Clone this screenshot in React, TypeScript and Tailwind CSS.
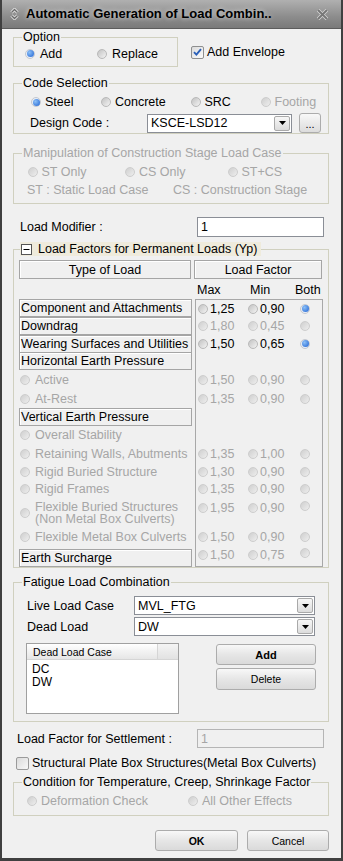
import React from "react";

const GROUP = "border border-[#d0d0bf] px-0";
const DIS = "text-[#a6a6a6]";

function Dot({ on, dim }: { on?: boolean; dim?: boolean }) {
  if (on) {
    return (
      <span className="flex h-[10px] w-[10px] shrink-0 items-center justify-center rounded-full border border-[#c4c8cf] bg-[#e9eef6]">
        <span className="h-[7px] w-[7px] rounded-full bg-[radial-gradient(circle_at_35%_35%,#8cc0f7,#1f62d2)]" />
      </span>
    );
  }
  return (
    <span
      className={
        "h-[10px] w-[10px] shrink-0 rounded-full border " +
        (dim
          ? "border-[#cdcdcd] bg-[linear-gradient(135deg,#cfcfcf,#eeeeee)]"
          : "border-[#b9b9b9] bg-[linear-gradient(135deg,#c2c2c2,#f4f4f4)]")
      }
    />
  );
}

function Radio({
  label,
  on,
  dim,
  w,
  gap = "gap-[4px]",
}: {
  label: React.ReactNode;
  on?: boolean;
  dim?: boolean;
  w?: string;
  gap?: string;
}) {
  return (
    <div className={`flex items-center ${gap} ${w ?? ""} ${dim ? DIS : ""}`}>
      <Dot on={on} dim={dim} />
      <span className="whitespace-nowrap">{label}</span>
    </div>
  );
}

function Legend({ children, dim }: { children: React.ReactNode; dim?: boolean }) {
  return <legend className={`ml-[8px] px-[1px] leading-[14px] ${dim ? DIS : ""}`}>{children}</legend>;
}

function Arrow() {
  return (
    <div className="mr-[1px] flex h-[15px] w-[16px] items-center justify-center rounded-[2px] border border-[#a9a9a9] bg-[linear-gradient(#f7f7f7,#dcdcdc)]">
      <svg width="7" height="4" viewBox="0 0 7 4">
        <path d="M0 0h7L3.5 4z" fill="#000" />
      </svg>
    </div>
  );
}

function Select({ value, w }: { value: string; w: string }) {
  return (
    <div className={`flex h-[19px] items-center border border-[#8a8e96] bg-white ${w}`}>
      <span className="flex-1 pl-[3px] leading-[14px]">{value}</span>
      <Arrow />
    </div>
  );
}

function Btn({ children, w, h, bold }: { children: React.ReactNode; w: string; h: string; bold?: boolean }) {
  return (
    <button
      className={`flex items-center justify-center rounded-[3px] border border-[#acacac] bg-[linear-gradient(#f8f8f8,#e6e6e6_50%,#dadada)] text-[10.5px] ${w} ${h} ${bold ? "font-bold" : ""}`}
    >
      {children}
    </button>
  );
}

type Row = {
  h: string;
  rh: string;
  label: string[];
  box?: boolean;
  vals?: [string, string];
  both?: boolean;
  black?: boolean;
  top?: string;
  boxBottom?: boolean;
};

const rows: Row[] = [
  { h: "h-[18px]", rh: "h-[17px]", label: ["Component and Attachments"], box: true, vals: ["1,25", "0,90"], both: true, black: true },
  { h: "h-[18px]", rh: "h-[18px]", label: ["Downdrag"], box: true, vals: ["1,80", "0,45"] },
  { h: "h-[17px]", rh: "h-[17px]", label: ["Wearing Surfaces and Utilities"], box: true, vals: ["1,50", "0,65"], both: true, black: true },
  { h: "h-[19px]", rh: "h-[19px]", label: ["Horizontal Earth Pressure"], box: true },
  { h: "h-[18px]", rh: "h-[18px]", label: ["Active"], vals: ["1,50", "0,90"] },
  { h: "h-[19px]", rh: "h-[19px]", label: ["At-Rest"], vals: ["1,35", "0,90"] },
  { h: "h-[18px]", rh: "h-[18px]", label: ["Vertical Earth Pressure"], box: true },
  { h: "h-[18px]", rh: "h-[18px]", label: ["Overall Stability"] },
  { h: "h-[19px]", rh: "h-[19px]", label: ["Retaining Walls, Abutments"], vals: ["1,35", "1,00"] },
  { h: "h-[17px]", rh: "h-[17px]", label: ["Rigid Buried Structure"], vals: ["1,30", "0,90"] },
  { h: "h-[18px]", rh: "h-[18px]", label: ["Rigid Frames"], vals: ["1,35", "0,90"] },
  { h: "h-[30px]", rh: "h-[30px]", label: ["Flexible Buried Structures", "(Non Metal Box Culverts)"], vals: ["1,95", "0,90"], top: "pt-[3px]" },
  { h: "h-[18px]", rh: "h-[18px]", label: ["Flexible Metal Box Culverts"], vals: ["1,50", "0,90"] },
  { h: "h-[21px]", rh: "h-[20px]", label: ["Earth Surcharge"], box: true, boxBottom: true, vals: ["1,50", "0,75"], top: "pt-[2px]" },
];

const BOX = "border border-[#a5a5a5] shadow-[inset_1px_1px_0_#ffffff]";

function LeftCell({ r }: { r: Row }) {
  if (r.box) {
    return (
      <div className={`flex ${r.h} ${r.boxBottom ? "items-end" : "items-stretch"}`}>
        <div className={`flex h-[18px] w-full items-center pl-[1px] ${BOX} ${r.boxBottom ? "h-[17px]" : ""}`}>
          {r.label[0]}
        </div>
      </div>
    );
  }
  return (
    <div className={`flex ${r.h} items-center pl-[1px] ${DIS}`}>
      <Dot dim />
      <span className="ml-[5px] whitespace-nowrap leading-[12px]">
        {r.label.map((l, i) => (
          <React.Fragment key={l}>
            {i > 0 && <br />}
            {l}
          </React.Fragment>
        ))}
      </span>
    </div>
  );
}

function RightCell({ r }: { r: Row }) {
  return (
    <div className={`flex ${r.rh} ${r.top ? "items-start " + r.top : "items-center"} pl-[2px]`}>
      {r.vals && (
        <>
          <Radio label={r.vals[0]} dim={!r.black} w="w-[50px]" gap="gap-[2px]" />
          <Radio label={r.vals[1]} dim={!r.black} w="w-[52px]" gap="gap-[2px]" />
          <Dot on={r.both} dim={!r.both} />
        </>
      )}
    </div>
  );
}

export default function App() {
  return (
    <div className="h-[861px] w-[343px] overflow-hidden border-x-2 border-b-[3px] border-[#404040] bg-[#f0f0f0] font-['Liberation_Sans',Arial,sans-serif] text-[12.5px] leading-[14px] text-black">
      {/* title bar */}
      <div className="flex h-[29px] items-center border-b border-[#5c5c5c] bg-[linear-gradient(#b0b0b0,#8c8c8c_60%,#7a7a7a)]">
        <svg className="ml-[8px]" width="9" height="12" viewBox="0 0 9 12">
          <path d="M1.5 4.5 4.5 1.5 7.5 4.5M1.5 7.5 4.5 10.5 7.5 7.5" fill="none" stroke="#e8e8e8" strokeWidth="3" />
          <path d="M1.5 4.5 4.5 1.5 7.5 4.5M1.5 7.5 4.5 10.5 7.5 7.5" fill="none" stroke="#6a6a6a" strokeWidth="1.4" />
        </svg>
        <span className="ml-[7px] text-[13px] font-bold [text-shadow:0_0_5px_rgba(255,255,255,0.7)]">
          Automatic Generation of Load Combin..
        </span>
        <svg className="ml-auto mr-[12px]" width="13" height="11" viewBox="0 0 13 11">
          <path d="M2 1 11 10M11 1 2 10" stroke="#d9d9d9" strokeWidth="3.4" />
          <path d="M2 1 11 10M11 1 2 10" stroke="#777" strokeWidth="2" />
        </svg>
      </div>

      <div className="px-[11px]">
        {/* option */}
        <div className="mt-[1px] flex items-start">
          <fieldset className={`${GROUP} w-[165px] pb-[5px]`}>
            <Legend>Option</Legend>
            <div className="flex h-[17px] items-center pt-[2px] pl-[11px]">
              <Radio label="Add" on w="w-[72px]" gap="gap-[5px]" />
              <Radio label="Replace" gap="gap-[5px]" />
            </div>
          </fieldset>
          <div className="ml-[13px] mt-[15px] flex items-center gap-[3px]">
            <span className="flex h-[13px] w-[13px] items-center justify-center rounded-[2px] border border-[#8e8f8f] bg-[linear-gradient(135deg,#dcdcdc,#fbfbfb)]">
              <svg width="9" height="8" viewBox="0 0 9 8">
                <path d="M1 4.2 3.4 6.6 8 1.2" fill="none" stroke="#2a5fb8" strokeWidth="1.9" />
              </svg>
            </span>
            <span>Add Envelope</span>
          </div>
        </div>

        {/* code selection */}
        <fieldset className={`${GROUP} mt-[9px] w-[316px]`}>
          <Legend>Code Selection</Legend>
          <div className="mt-[4px] flex h-[16px] items-center pl-[17px]">
            <Radio label="Steel" on w="w-[70px]" />
            <Radio label="Concrete" w="w-[89.5px]" />
            <Radio label="SRC" w="w-[70px]" />
            <Radio label="Footing" dim />
          </div>
          <div className="mt-[3px] flex h-[20px] items-center pl-[16px]">
            <span className="w-[117px]">Design Code :</span>
            <Select value="KSCE-LSD12" w="w-[145px]" />
            <div className="ml-[7px] flex h-[20px] w-[22px] items-end justify-center rounded-[3px] border border-[#acacac] bg-[linear-gradient(#f8f8f8,#dcdcdc)] pb-[4px] text-[11px] leading-[8px]">
              ...
            </div>
          </div>
        </fieldset>

        {/* manipulation */}
        <fieldset className={`${GROUP} mt-[12px] w-[316px] pb-[5px]`}>
          <Legend dim>Manipulation of Construction Stage Load Case</Legend>
          <div className="mt-[4px] flex h-[16px] items-center pl-[13.5px]">
            <Radio label="ST Only" dim w="w-[97.5px]" />
            <Radio label="CS Only" dim w="w-[102.5px]" />
            <Radio label="ST+CS" dim />
          </div>
          <div className={`mt-[2px] flex h-[16px] items-center pl-[13px] ${DIS}`}>
            <span className="w-[146px]">ST : Static Load Case</span>
            <span>CS : Construction Stage</span>
          </div>
        </fieldset>

        {/* load modifier */}
        <div className="mt-[13px] flex items-center pl-[7px]">
          <span className="w-[177px]">Load Modifier :</span>
          <div className="flex h-[20px] w-[127px] items-center border border-[#8a8e96] bg-white pl-[3px]">1</div>
        </div>

        {/* load factors */}
        <fieldset className={`${GROUP} mt-[5px] w-[316px]`}>
          <legend className="ml-[6px] flex h-[14px] items-center bg-[#efebdc] pl-[1px] pr-[4px] leading-[14px]">
            <svg width="11" height="11" viewBox="0 0 11 11">
              <rect x="0.5" y="0.5" width="10" height="10" fill="#fff" stroke="#555" />
              <path d="M2.5 5.5h6" stroke="#000" />
            </svg>
            <span className="ml-[6px]">Load Factors for Permanent Loads (Yp)</span>
          </legend>
          <div className="pl-[5px]">
            <div className="mt-[4px] flex h-[19px] gap-[3px]">
              <div className={`flex w-[172px] items-center justify-center ${BOX}`}>Type of Load</div>
              <div className={`flex w-[128px] items-center justify-center ${BOX}`}>Load Factor</div>
            </div>
            <div className="flex h-[20px] items-center pt-[2px]">
              <span className="ml-[178px] w-[53px]">Max</span>
              <span className="w-[45px]">Min</span>
              <span>Both</span>
            </div>
            <div className="flex">
              <div className="flex w-[173px] flex-col">
                {rows.map((r, i) => (
                  <LeftCell key={i} r={r} />
                ))}
              </div>
              <div className="ml-[3px] flex w-[128px] flex-col border border-[#a8a8a8]">
                {rows.map((r, i) => (
                  <RightCell key={i} r={r} />
                ))}
              </div>
            </div>
          </div>
        </fieldset>

        {/* fatigue */}
        <fieldset className={`${GROUP} mt-[7px] w-[316px] pb-[7px]`}>
          <Legend>Fatigue Load Combination</Legend>
          <div className="mt-[7px] flex items-center pl-[13px]">
            <span className="w-[107px]">Live Load Case</span>
            <Select value="MVL_FTG" w="w-[181px]" />
          </div>
          <div className="mt-[2px] flex items-center pl-[13px]">
            <span className="w-[107px]">Dead Load</span>
            <Select value="DW" w="w-[181px]" />
          </div>
          <div className="mt-[7px] flex items-start pl-[12px]">
            <div className="h-[71px] w-[153px] border border-[#a0a0a0] bg-white">
              <div className="flex h-[16px] border-b border-[#d5d5d5] bg-[linear-gradient(#ffffff,#f2f2f2_50%,#e6e6e6)] text-[10.5px]">
                <span className="flex w-[131px] items-center border-r border-[#d5d5d5] pl-[6px]">Dead Load Case</span>
                <span className="flex-1 bg-[linear-gradient(#f4f4f4,#e2e2e2)]" />
              </div>
              <div className="pl-[5px] pt-[3px] text-[12px] leading-[13px]">
                <div>DC</div>
                <div>DW</div>
              </div>
            </div>
            <div className="ml-[37px] flex flex-col">
              <div className="mt-[1px]">
                <Btn w="w-[100px]" h="h-[21px]" bold>
                  <span className="text-[11px]">Add</span>
                </Btn>
              </div>
              <div className="mt-[3px]">
                <Btn w="w-[100px]" h="h-[22px]">
                  Delete
                </Btn>
              </div>
            </div>
          </div>
        </fieldset>

        {/* settlement */}
        <div className="mt-[7px] flex items-center pl-[4px]">
          <span className="w-[180px]">Load Factor for Settlement :</span>
          <div className={`flex h-[19px] w-[127px] items-center border border-[#b5b5b5] pl-[3px] ${DIS}`}>1</div>
        </div>

        <div className="mt-[8px] flex items-center gap-[3px] pl-[3px]">
          <span className="h-[13px] w-[13px] rounded-[2px] border border-[#9a9a9a] bg-[linear-gradient(135deg,#dadada,#f8f8f8)]" />
          <span>Structural Plate Box Structures(Metal Box Culverts)</span>
        </div>

        {/* condition */}
        <fieldset className={`${GROUP} mt-[5px] w-[316px] pb-[6px]`}>
          <Legend>Condition for Temperature, Creep, Shrinkage Factor</Legend>
          <div className="mt-[4px] flex h-[16px] items-center pl-[13px]">
            <Radio label="Deformation Check" dim w="w-[161px]" />
            <Radio label="All Other Effects" dim />
          </div>
        </fieldset>

        <div className="mt-[14px] flex gap-[9px] pl-[142px]">
          <Btn w="w-[83px]" h="h-[21px]" bold>
            OK
          </Btn>
          <Btn w="w-[82px]" h="h-[21px]">
            Cancel
          </Btn>
        </div>
      </div>
    </div>
  );
}
